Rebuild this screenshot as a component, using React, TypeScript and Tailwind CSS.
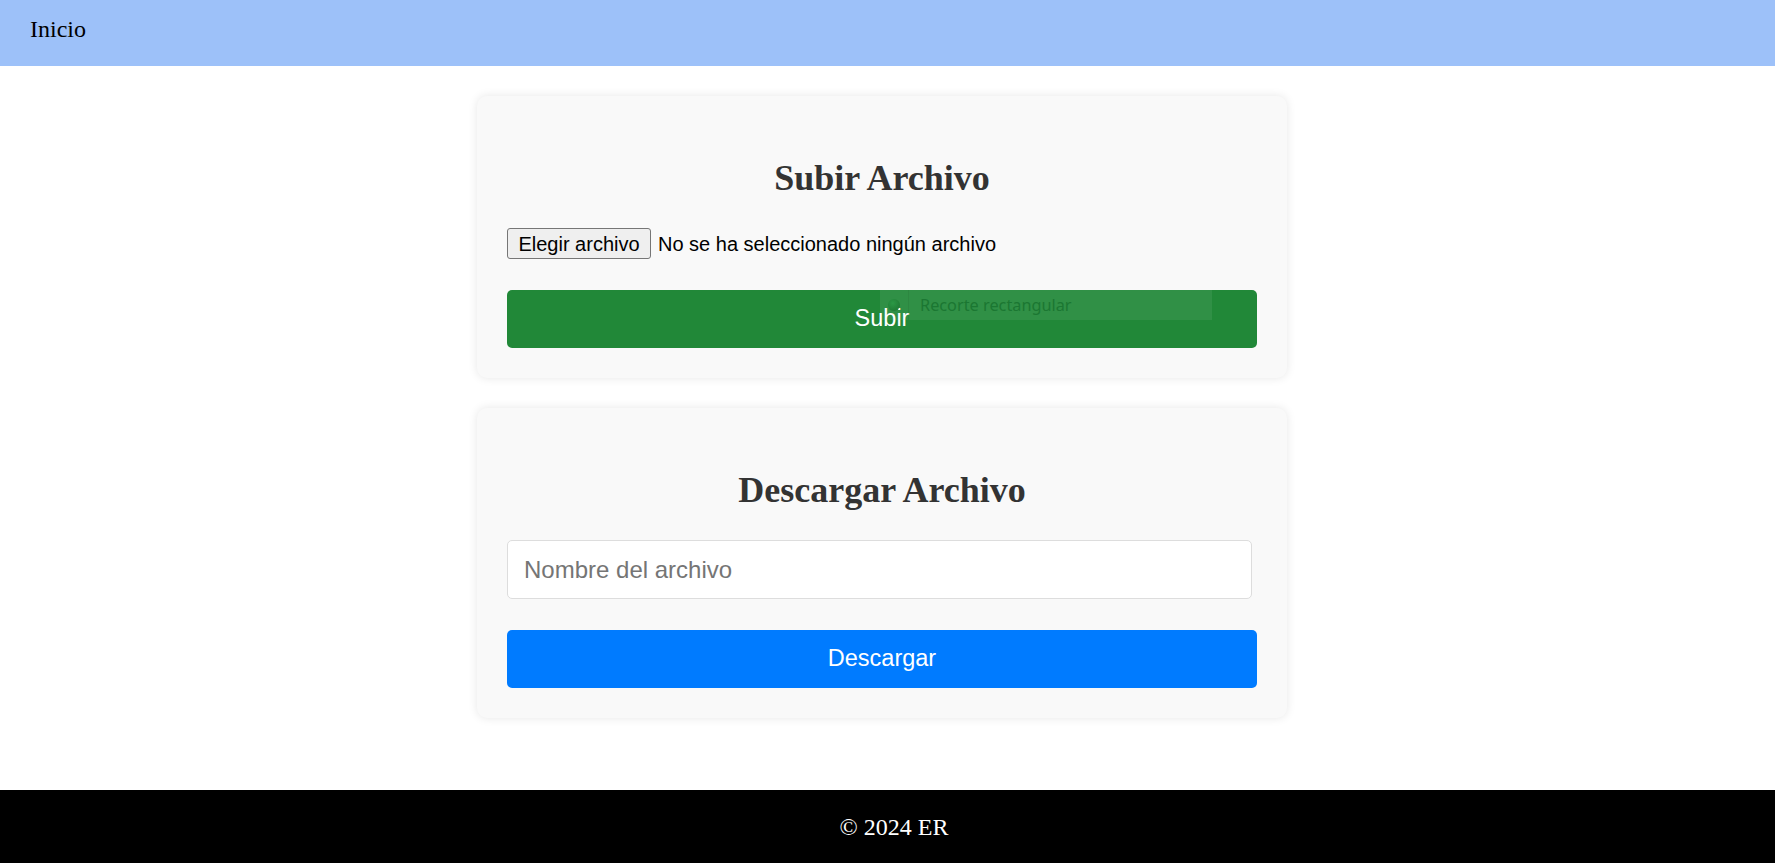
import React from "react";

const serif = { fontFamily: '"Liberation Serif", "Times New Roman", serif' };
const sans = { fontFamily: '"Liberation Sans", Arial, sans-serif' };

export default function App() {
  return (
    <div className="min-h-screen flex flex-col bg-white" style={serif}>
      <header className="h-[66px] bg-[#9dc1f9] pt-[11px] pl-[30px] shrink-0">
        <span className="text-[24px] text-black leading-normal">Inicio</span>
      </header>

      <main className="flex-1 flex flex-col items-center pt-[30px] pr-[11px] gap-[30px]">
        <section className="w-[810px] bg-[#f9f9f9] rounded-[10px] shadow-[0_0_10px_rgba(0,0,0,0.1)] p-[30px]">
          <h2 className="mt-[32px] mb-[30px] text-center text-[36px] leading-[40px] font-bold text-[#333]">
            Subir Archivo
          </h2>
          <div className="h-[31px] mb-[31px] flex items-center" style={sans}>
            <span className="h-[31px] w-[144px] flex items-center justify-center border border-[#767676] bg-[#efefef] rounded-[3px] text-[20px] text-black">
              Elegir archivo
            </span>
            <span className="ml-[7px] text-[20px] text-black">No se ha seleccionado ningún archivo</span>
          </div>
          <div className="relative h-[58px] w-[750px] rounded-[5px] bg-[#218838] flex items-center justify-center" style={sans}>
            <span className="text-white text-[23.5px]">Subir</span>
            <div className="absolute left-[373px] top-0 w-[332px] h-[30px] bg-[rgba(255,255,255,0.07)] flex items-center">
              <div className="w-[29px] h-full border-r border-[rgba(0,0,0,0.06)] flex items-center justify-center">
                <div className="w-[12px] h-[12px] rounded-full bg-[radial-gradient(circle_at_40%_35%,#2a9a45,#176b2a)] opacity-80" />
              </div>
              <span
                className="ml-[11px] text-[16.3px] text-[#1b7732]"
                style={{ fontFamily: '"Noto Sans", "Open Sans", sans-serif' }}
              >
                Recorte rectangular
              </span>
            </div>
          </div>
        </section>

        <section className="w-[810px] bg-[#f9f9f9] rounded-[10px] shadow-[0_0_10px_rgba(0,0,0,0.1)] p-[30px]">
          <h2 className="mt-[32px] mb-[30px] text-center text-[36px] leading-[40px] font-bold text-[#333]">
            Descargar Archivo
          </h2>
          <input
            type="text"
            placeholder="Nombre del archivo"
            className="block w-[745px] h-[59px] mb-[31px] px-[16px] bg-white border border-[#dddddd] rounded-[5px] text-[24px] placeholder:text-[#757575] outline-none"
            style={sans}
          />
          <div className="h-[58px] w-[750px] rounded-[5px] bg-[#007bff] flex items-center justify-center" style={sans}>
            <span className="text-white text-[23.5px]">Descargar</span>
          </div>
        </section>
      </main>

      <footer className="h-[73px] bg-black flex items-center justify-center pl-[13px] shrink-0">
        <span className="text-white text-[24px]">© 2024 ER</span>
      </footer>
    </div>
  );
}
